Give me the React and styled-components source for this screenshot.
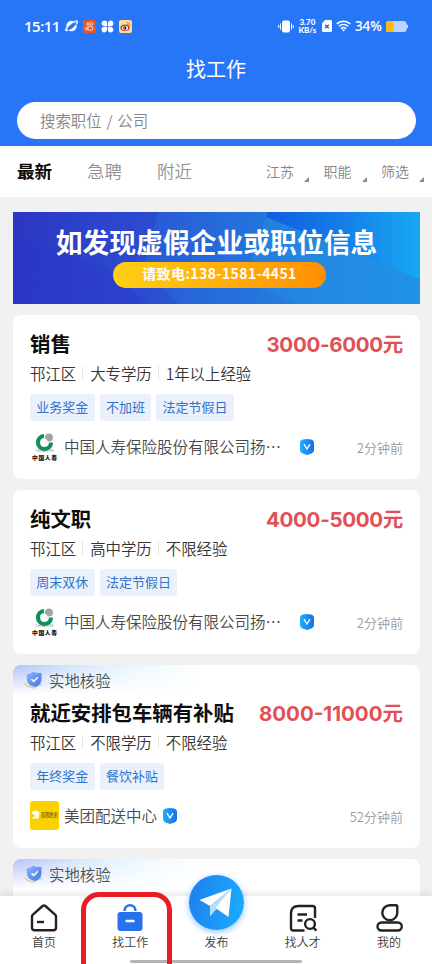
import React from 'react'
import styled, { createGlobalStyle, css } from 'styled-components'

const GlobalStyle = createGlobalStyle`
  * {
    box-sizing: border-box;
  }

  body {
    margin: 0;
    font-family: 'Noto Sans CJK SC', sans-serif;
  }
`

const Screen = styled.div`
  position: relative;
  display: flex;
  flex-direction: column;
  width: 432px;
  height: 964px;
  overflow: hidden;
  background-color: #f1f1f1;
`

const Header = styled.header`
  flex: none;
  height: 146px;
  padding: 0 16px;
  background-color: #2876f8;
`

const StatusBar = styled.div`
  display: flex;
  align-items: center;
  justify-content: space-between;
  height: 52px;
  padding: 0 8px;
  color: #fff;
`

const StatusGroup = styled.div`
  display: flex;
  align-items: center;
  gap: ${props => props.$gap}px;
`

const Clock = styled.span`
  font-family: 'Open Sans', sans-serif;
  font-size: 15px;
  font-weight: 600;
  line-height: 20px;
  letter-spacing: -0.5px;
`

const Speed = styled.span`
  display: flex;
  flex-direction: column;
  align-items: center;
  width: 19px;
  margin-right: 1px;
  font-family: Lato, sans-serif;
  font-size: 8px;
  font-weight: 900;
  line-height: 8px;
  white-space: nowrap;
`

const Percent = styled.span`
  font-family: 'Open Sans', sans-serif;
  font-size: 13.5px;
  font-weight: 600;
  line-height: 20px;
`

const Title = styled.h1`
  margin: 0;
  color: #fff;
  font-size: 20px;
  font-weight: 400;
  line-height: 34px;
  height: 35px;
  text-align: center;
`

const Search = styled.div`
  height: 37px;
  margin: 15px 0 0 1px;
  padding-left: 23px;
  border-radius: 19px;
  background-color: #fff;
  color: #858585;
  font-size: 15.4px;
  font-weight: 350;
  line-height: 36px;
  word-spacing: 1.4px;
`

const Filters = styled.div`
  display: flex;
  flex: none;
  justify-content: space-between;
  height: 51px;
  padding: 0 8px 0 17px;
  background-color: #fff;
  line-height: 50px;
`

const Tabs = styled.div`
  display: flex;
  gap: 35px;
`

const Tab = styled.span`
  color: #929292;
  font-size: 17.5px;
  font-weight: 350;

  ${props =>
    props.$active &&
    css`
      color: #0a0a0a;
      font-weight: 700;
    `}
`

const Selects = styled.div`
  display: flex;
  gap: 14.5px;
`

const Select = styled.span`
  display: flex;
  align-items: flex-end;
  gap: 10px;
  height: 51px;
  color: #858585;
  font-size: 14px;
  font-weight: 350;
  line-height: 51px;

  &::after {
    content: '';
    margin-bottom: 15px;
    border-bottom: 5px solid #8a8a8a;
    border-left: 5px solid transparent;
  }
`

const List = styled.main`
  display: flex;
  flex: 1;
  flex-direction: column;
  min-height: 0;
  padding: 15px 12px 0 13px;
  overflow: hidden;
`

const Banner = styled.div`
  position: relative;
  display: flex;
  flex: none;
  flex-direction: column;
  align-items: center;
  height: 92px;
  padding-top: 11px;
  background: linear-gradient(96deg, #2d36c3 0%, #2b4dd0 35%, #2368d8 52%, #2283e0 75%, #1b96e8 100%);
`

const BannerArt = styled.svg`
  position: absolute;
  top: 0;
  left: 0;
`

const BannerTitle = styled.div`
  position: relative;
  color: #fff;
  font-size: 26.8px;
  font-weight: 700;
  line-height: 38px;
  white-space: nowrap;
`

const BannerPhone = styled.div`
  position: relative;
  width: 213px;
  height: 26px;
  margin: 1px 0 0 6px;
  border-radius: 13px;
  background: linear-gradient(90deg, #ffd012, #ff8f00);
  color: #fff;
  font-size: 14px;
  font-weight: 700;
  line-height: 23px;
  letter-spacing: 0.4px;
  text-align: center;
`

const Card = styled.article`
  flex: none;
  margin-top: 11px;
  padding: 14px 17px 0;
  height: ${props => (props.$verified ? 183 : 164)}px;
  border-radius: 8px;
  background-color: #fff;

  ${props =>
    props.$verified &&
    css`
      padding-top: 0;
      background-image: linear-gradient(180deg, rgba(255, 255, 255, 0) 0, #fff 30px),
        linear-gradient(90deg, #b4c1fa 0, #d4e6fd 60px, #eaf7ff 120px, #fff 190px);
    `}
`

const Verified = styled.div`
  display: flex;
  align-items: center;
  gap: 5px;
  height: 33px;
  margin-left: -6px;
  padding-bottom: 3px;
  color: #4f4f4f;
  font-size: 15.4px;
  font-weight: 350;
  line-height: 30px;
`

const Row = styled.div`
  display: flex;
  align-items: flex-start;
  justify-content: space-between;
  height: 30px;
`

const JobName = styled.h2`
  margin: 0;
  color: #0d0d0d;
  font-size: 20.4px;
  font-weight: 700;
  line-height: 28px;
`

const Salary = styled.span`
  color: #e15054;
  font-family: 'Inter', 'Noto Sans CJK SC', sans-serif;
  font-size: 20.5px;
  font-weight: 700;
  line-height: 32px;
  letter-spacing: ${props => (props.$tight ? -0.3 : 0)}px;
`

const Meta = styled.div`
  display: flex;
  align-items: center;
  height: 30px;
  padding-bottom: 2px;
  color: #333;
  font-size: 15.4px;
  font-weight: 350;
  line-height: 28px;

  span + span {
    display: flex;
    align-items: center;
  }

  span + span::before {
    content: '';
    width: 1px;
    height: 14px;
    margin: 0 7px 0 6px;
    background-color: #e8e8e8;
  }
`

const Tags = styled.div`
  display: flex;
  gap: 5px;
  margin-top: 5px;
`

const Tag = styled.span`
  height: 27px;
  padding: 0 6.3px;
  border-radius: 3px;
  background-color: #eaf1fd;
  color: #2f73c9;
  font-size: 13px;
  line-height: 26px;
`

const CompanyRow = styled.div`
  display: flex;
  align-items: center;
  height: 30px;
  margin-top: 10px;
`

const Company = styled.span`
  margin: 0 ${props => (props.$long ? 19 : 6)}px 0 5px;
  color: #4a4a4a;
  font-size: 15.5px;
  font-weight: 350;
  line-height: 30px;
`

const Time = styled.span`
  margin-left: auto;
  padding-top: 4px;
  color: #9b9b9b;
  font-size: 13px;
  font-weight: 350;
  line-height: 26px;
`

const BottomBar = styled.nav`
  position: relative;
  display: grid;
  flex: none;
  grid-template-columns: repeat(5, 1fr);
  height: 68px;
  padding: 8px 0 0 1px;
  background-color: #fff;
  box-shadow: 0 -1px 8px rgba(0, 0, 0, 0.13);
`

const NavItem = styled.a`
  display: flex;
  flex-direction: column;
  align-items: center;
  color: #3c3c3c;
  font-size: 12px;
  font-weight: 350;
  line-height: 18px;

  > svg {
    flex: none;
    margin-bottom: 1px;
  }
`

const Publish = styled.span`
  display: flex;
  align-items: center;
  justify-content: center;
  width: 55px;
  height: 55px;
  margin: -29px 0 3px;
  border-radius: 50%;
  background: linear-gradient(100deg, #1f7eee, #1aaeff);
  box-shadow: 0 2px 6px rgba(40, 140, 255, 0.5);
`

const HomeIndicator = styled.div`
  position: absolute;
  bottom: 1.5px;
  left: 130px;
  width: 172px;
  height: 3px;
  border-radius: 2px;
  background-color: #b4b4b4;
`

const Marker = styled.div`
  position: absolute;
  top: 892px;
  left: 81px;
  width: 91px;
  height: 90px;
  border: 5px solid #e81d25;
  border-radius: 18px;
`

const Badge = styled.svg`
  flex: none;
  margin-top: 1px;
`

const PlanetIcon = () => (
  <svg width="13" height="12" viewBox="0 0 13 12">
    <circle cx="6.5" cy="6" r="5.2" fill="#fff" />
    <ellipse cx="6.7" cy="6.3" rx="5.2" ry="1.9" fill="#2876f8" transform="rotate(-40 6.700 6.300)" />
    <path d="M2.800 9.800C.6 12 .2 9.800 1.600 7.600M9.500 1.500c2.800-1.600 3.600-.2 2.100 2.300" fill="none" stroke="#fff" strokeWidth="1.3" />
  </svg>
)

const KuaishouIcon = () => (
  <svg width="13" height="13" viewBox="0 0 13 13">
    <rect width="13" height="13" rx="2" fill="#e9542f" />
    <g fill="none" stroke="#ffe9dc" strokeWidth="0.9">
      <circle cx="5" cy="4" r="1.2" />
      <circle cx="8.4" cy="3.8" r="1.5" />
      <rect x="4.9" y="6.6" width="4.8" height="3.6" rx="1.2" />
      <path d="M4.9 8L3 7.2v2.8l1.9-.8" />
    </g>
  </svg>
)

const CloverIcon = () => (
  <svg width="13" height="13" viewBox="0 0 13 13">
    <g fill="#fff">
      <path d="M6.2 6.2V3C6.2-.4.6-.2.6 3.2.6 5.4 2.2 6.2 6.2 6.2z" />
      <path d="M6.8 6.2H10C13.4 6.2 13.2.6 9.8.6 7.6.6 6.8 2.2 6.8 6.2z" />
      <path d="M6.8 6.8V10c0 3.4 5.6 3.2 5.6-.2 0-2.200-1.600-3-5.600-3z" />
      <path d="M6.200 6.800H3C-.4 6.800-.2 12.400 3.200 12.400 5.400 12.400 6.200 10.800 6.200 6.800z" />
    </g>
    <circle cx="6.5" cy="6.5" r="0.9" fill="#2876f8" />
  </svg>
)

const WeiboIcon = () => (
  <svg width="13" height="13" viewBox="0 0 13 13">
    <rect width="13" height="13" rx="2" fill="#fbdf94" />
    <ellipse cx="6" cy="7.8" rx="4.5" ry="3.3" fill="#d8302a" />
    <ellipse cx="6" cy="8" rx="3" ry="2.2" fill="#fff" />
    <circle cx="5.8" cy="8" r="1.7" fill="#1a1a1a" />
    <circle cx="5.2" cy="8.2" r="0.6" fill="#fff" />
    <path d="M7.8 2.6c2-.4 3.6 1.2 3 3.2M8 4.3c1-.2 1.7.4 1.4 1.4" fill="none" stroke="#e06a28" strokeWidth="0.9" />
  </svg>
)

const VibrateIcon = () => (
  <svg width="16" height="13" viewBox="0 0 16 13">
    <rect x="4" y="0.5" width="8" height="12" rx="2" fill="#fff" />
    <path d="M2.5 3.5v6M0.7 5v3M13.5 3.5v6M15.3 5v3" stroke="#fff" strokeWidth="1" />
  </svg>
)

const SimIcon = () => (
  <svg width="10" height="12" viewBox="0 0 10 12">
    <path d="M3.2 0H8.5Q10 0 10 1.5v9Q10 12 8.5 12h-7Q0 12 0 10.5V3.2z" fill="#fff" />
    <path d="M3.2 4.7l3.6 3.6M6.8 4.7L3.2 8.3" stroke="#2b5fb8" strokeWidth="1.3" />
  </svg>
)

const WifiIcon = () => (
  <svg width="15" height="12" viewBox="0 0 15 12">
    <g fill="none" stroke="#fff" strokeWidth="1.5">
      <path d="M0.7 3.9c4-3.7 9.6-3.7 13.6 0" />
      <path d="M2.8 6.3c2.8-2.5 6.6-2.5 9.4 0" />
      <path d="M4.9 8.6c1.6-1.4 3.6-1.4 5.2 0" />
    </g>
    <path d="M5.8 9.8q1.7-1.2 3.4 0L7.5 11.6z" fill="#fff" />
  </svg>
)

const BatteryIcon = () => (
  <svg width="22" height="11" viewBox="0 0 22 11">
    <rect width="20.5" height="11" rx="2.5" fill="#bcd4fc" />
    <path d="M20.3 3q1.7.6 1.7 2.5t-1.7 2.5z" fill="#dce9ff" />
    <path d="M2.5 0H7.5v11h-5Q0 11 0 8.5v-6Q0 0 2.5 0z" fill="#fdb913" />
  </svg>
)

const CheckBadge = () => (
  <Badge width="14" height="16" viewBox="0 0 14 16">
    <defs>
      <linearGradient id="badge" x1="0" x2="1">
        <stop offset="0" stopColor="#1fb0f8" />
        <stop offset="1" stopColor="#156ef0" />
      </linearGradient>
    </defs>
    <path d="M3 .5Q7-.3 11 .5 14 1 14 4V11Q14 13.8 11.5 14.5L7 16 2.5 14.5Q0 13.8 0 11V4Q0 1 3 .5z" fill="url(#badge)" />
    <path d="M4 5.200L7 10l3-4.800" fill="none" stroke="#fff" strokeWidth="1.4" />
  </Badge>
)

const ShieldIcon = () => (
  <svg width="20" height="18" viewBox="0 0 20 18">
    <defs>
      <linearGradient id="shield" x1="0" y1="0" x2="1" y2="1">
        <stop offset="0" stopColor="#8eb6f8" />
        <stop offset="1" stopColor="#4672df" />
      </linearGradient>
    </defs>
    <path d="M2.5 3.5Q6.5 3 9 .8q4 1.7 8.5 1.2v7q-.8 5-6 7.3-7.5-1.3-8.5-6.5z" fill="url(#shield)" />
    <path d="M7.5 8.2l2.3 2.2 4-4.2" fill="none" stroke="#fff" strokeWidth="1.5" />
    <path d="M.5 12.5q4.500 5 11.500 4" fill="none" stroke="#e7cfaa" strokeWidth="1.6" />
    <path d="M15 14.5l2.5-2" stroke="#9bc4f7" strokeWidth="1.5" />
  </svg>
)

const ChinaLifeLogo = () => (
  <svg width="29" height="29" viewBox="0 0 29 29">
    <path d="M14 4A6.5 6.5 0 1 0 21 10.5" fill="none" stroke="#10915a" strokeWidth="4.2" />
    <circle cx="19" cy="5.5" r="4" fill="#a2a5a5" />
    <circle cx="14.5" cy="10" r="3" fill="#fff" />
    <text x="5.5" y="20.2" fontSize="2.6" textLength="18" fill="#777" fontFamily="Liberation Sans, sans-serif">
      CHINA LIFE
    </text>
    <text x="2" y="27.5" fontSize="5.8" fontWeight="900" fill="#111" textLength="25" fontFamily="Noto Sans CJK SC, sans-serif">
      中国人寿
    </text>
  </svg>
)

const MeituanLogo = () => (
  <svg width="29" height="29" viewBox="0 0 29 29">
    <rect width="29" height="29" rx="3" fill="#fdd000" />
    <path d="M1.5 11l2.5-1.3h3.5L9.5 12 8.5 17.5H1.5l3.8-2.6-2-1.4z" fill="#fff" />
    <text x="10.8" y="15" fontSize="4.3" fontWeight="500" fill="#5d4a00" textLength="17" fontFamily="Noto Sans CJK SC, sans-serif">
      美团外卖
    </text>
    <path d="M11 16.6h16.5" stroke="#8a6f00" strokeWidth="0.7" strokeDasharray="1.5 0.5" />
  </svg>
)

const HomeIcon = () => (
  <svg width="28" height="28" viewBox="0 0 28 28">
    <path
      d="M12.6 2L2.9 10.6Q2 11.4 2 12.6V23.5Q2 26.3 4.8 26.3H23.2Q26 26.3 26 23.5V12.6Q26 11.4 25.1 10.6L15.4 2Q14 .8 12.6 2z"
      fill="none"
      stroke="#222"
      strokeWidth="2.4"
    />
    <path d="M7 18h7" stroke="#222" strokeWidth="2.4" />
  </svg>
)

const BagIcon = () => (
  <svg width="28" height="28" viewBox="0 0 28 28">
    <path d="M8.5 7C8.5-.6 19.5-.6 19.5 7" fill="none" stroke="#2672ee" strokeWidth="2.4" />
    <rect x="1.5" y="8" width="25" height="19" rx="3" fill="#2672ee" />
    <path d="M10.5 17h7" stroke="#fff" strokeWidth="2.4" strokeLinecap="round" />
  </svg>
)

const PlaneIcon = () => (
  <svg width="32" height="32" viewBox="0 0 32 32">
    <path d="M31.500 1.500L-.5 13 10 19z" fill="#fff" />
    <path d="M31.500 1.500L10 19v10.500L16.500 22z" fill="#b5dffb" />
    <path d="M31.500 1.500L15.500 21 28.500 30z" fill="#fff" />
  </svg>
)

const TalentIcon = () => (
  <svg width="28" height="28" viewBox="0 0 28 28">
    <g fill="none" stroke="#222" strokeWidth="2.4">
      <path d="M15.5 26.500H4.500Q2 26.500 2 24V9.500Q2 2 9.500 2H23.500Q26 2 26 4.500V14" />
      <path d="M8.500 10.500h9.500M8.500 16.500h5" />
      <circle cx="21" cy="20" r="4.900" />
      <path d="M24.400 23.600l3 3" />
    </g>
  </svg>
)

const MineIcon = () => (
  <svg width="28" height="28" viewBox="0 0 28 28">
    <g fill="none" stroke="#222" strokeWidth="2.4">
      <path d="M14.800 1.200H21Q22.300 1.200 22.300 2.500V8.700A7.500 7.500 0 1 1 14.800 1.200z" />
      <rect x="2.500" y="18.500" width="24.300" height="8" rx="4" />
    </g>
  </svg>
)

const jobs = [
  {
    name: '销售',
    salary: '3000-6000元',
    meta: ['邗江区', '大专学历', '1年以上经验'],
    tags: ['业务奖金', '不加班', '法定节假日'],
    company: '中国人寿保险股份有限公司扬…',
    time: '2分钟前',
    Logo: ChinaLifeLogo,
    long: true
  },
  {
    name: '纯文职',
    salary: '4000-5000元',
    meta: ['邗江区', '高中学历', '不限经验'],
    tags: ['周末双休', '法定节假日'],
    company: '中国人寿保险股份有限公司扬…',
    time: '2分钟前',
    Logo: ChinaLifeLogo,
    long: true
  },
  {
    name: '就近安排包车辆有补贴',
    salary: '8000-11000元',
    meta: ['邗江区', '不限学历', '不限经验'],
    tags: ['年终奖金', '餐饮补贴'],
    company: '美团配送中心',
    time: '52分钟前',
    Logo: MeituanLogo,
    verified: true
  }
]

const VerifiedLabel = () => (
  <Verified>
    <ShieldIcon />
    实地核验
  </Verified>
)

const JobCard = ({ job }) => (
  <Card $verified={job.verified}>
    {job.verified && <VerifiedLabel />}
    <Row>
      <JobName>{job.name}</JobName>
      <Salary $tight={!job.verified}>{job.salary}</Salary>
    </Row>
    <Meta>
      {job.meta.map(item => (
        <span key={item}>{item}</span>
      ))}
    </Meta>
    <Tags>
      {job.tags.map(tag => (
        <Tag key={tag}>{tag}</Tag>
      ))}
    </Tags>
    <CompanyRow>
      <job.Logo />
      <Company $long={job.long}>{job.company}</Company>
      <CheckBadge />
      <Time>{job.time}</Time>
    </CompanyRow>
  </Card>
)

export default function App() {
  return (
    <Screen>
      <GlobalStyle />
      <Header>
        <StatusBar>
          <StatusGroup $gap={5}>
            <Clock>15:11</Clock>
            <PlanetIcon />
            <KuaishouIcon />
            <CloverIcon />
            <WeiboIcon />
          </StatusGroup>
          <StatusGroup $gap={4}>
            <VibrateIcon />
            <Speed>
              <span>3.70</span>
              <span>KB/s</span>
            </Speed>
            <SimIcon />
            <WifiIcon />
            <Percent>34%</Percent>
            <BatteryIcon />
          </StatusGroup>
        </StatusBar>
        <Title>找工作</Title>
        <Search>搜索职位 / 公司</Search>
      </Header>
      <Filters>
        <Tabs>
          <Tab $active>最新</Tab>
          <Tab>急聘</Tab>
          <Tab>附近</Tab>
        </Tabs>
        <Selects>
          <Select>江苏</Select>
          <Select>职能</Select>
          <Select>筛选</Select>
        </Selects>
      </Filters>
      <List>
        <Banner>
          <BannerArt width="407" height="92" viewBox="0 0 407 92">
            <defs>
              <linearGradient id="band" x1="0" x2="1">
                <stop offset="0" stopColor="#125cdd" />
                <stop offset="0.5" stopColor="#157eea" />
                <stop offset="1" stopColor="#18a8f2" />
              </linearGradient>
            </defs>
            <path d="M0 26L95 56 135 92H0z" fill="#2b35c8" opacity="0.35" />
            <path d="M145 0L130 55 165 92H286L230 70 255 0z" fill="#2a7be0" opacity="0.3" />
            <path d="M255 0H268V11L407 67V92H286L230 70z" fill="#2590e2" opacity="0.45" />
            <path d="M255 0H407V67L253 5z" fill="url(#band)" />
          </BannerArt>
          <BannerTitle>如发现虚假企业或职位信息</BannerTitle>
          <BannerPhone>请致电:138-1581-4451</BannerPhone>
        </Banner>
        {jobs.map(job => (
          <JobCard key={job.name} job={job} />
        ))}
        <Card $verified>
          <VerifiedLabel />
        </Card>
      </List>
      <BottomBar>
        <NavItem>
          <HomeIcon />
          首页
        </NavItem>
        <NavItem>
          <BagIcon />
          找工作
        </NavItem>
        <NavItem>
          <Publish>
            <PlaneIcon />
          </Publish>
          发布
        </NavItem>
        <NavItem>
          <TalentIcon />
          找人才
        </NavItem>
        <NavItem>
          <MineIcon />
          我的
        </NavItem>
        <HomeIndicator />
      </BottomBar>
      <Marker />
    </Screen>
  )
}
